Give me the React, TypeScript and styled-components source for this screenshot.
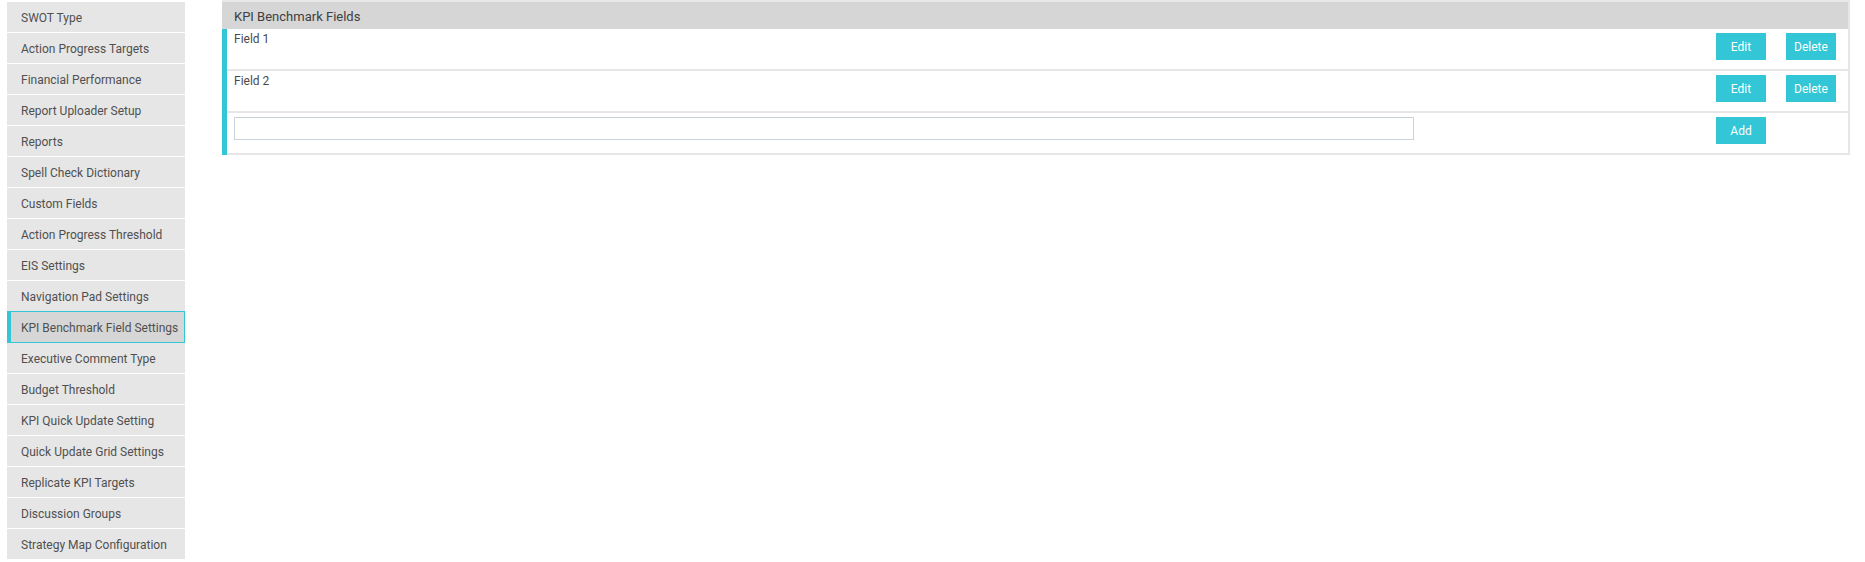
import React from "react";
import styled, { createGlobalStyle } from "styled-components";

const GlobalStyle = createGlobalStyle`
  html, body {
    margin: 0;
    padding: 0;
    background: #ffffff;
    font-family: Roboto, "Liberation Sans", Arial, sans-serif;
  }
  * { box-sizing: border-box; }
`;

const TEAL = "#32c6d6";

const Page = styled.div`
  display: flex;
  align-items: flex-start;
  gap: 37px;
  padding: 0 15px 0 7px;
`;

const Sidebar = styled.ul`
  list-style: none;
  margin: 2px 0 0 0;
  padding: 0;
  width: 178px;
  flex: none;
`;

const NavItem = styled.li<{ $active?: boolean }>`
  height: 31px;
  display: flex;
  align-items: center;
  padding-top: 1px;
  padding-left: ${(p) => (p.$active ? "10px" : "14px")};
  font-size: 12px;
  color: #505050;
  background: ${(p) => (p.$active ? "#d6d6d6" : "#e6e6e6")};
  border-bottom: 1px solid #ffffff;
  border-left: ${(p) => (p.$active ? `4px solid ${TEAL}` : "none")};
  ${(p) =>
    p.$active
      ? `border-top: 1px solid ${TEAL}; border-right: 1px solid ${TEAL}; border-bottom: 1px solid ${TEAL}; margin-top: -1px; height: 32px;`
      : ""}
  white-space: nowrap;
`;

const Panel = styled.section`
  flex: 1;
  border-top: 2px solid #e8e8e8;
  border-right: 2px solid #e6e6e6;
`;

const Header = styled.div`
  height: 27px;
  background: #d6d6d6;
  display: flex;
  align-items: center;
  padding: 1px 0 0 12px;
  font-size: 13px;
  color: #404040;
`;

const Body = styled.div`
  border-left: 5px solid ${TEAL};
`;

const Row = styled.div`
  height: 42px;
  border-bottom: 2px solid #e6e6e6;
  display: flex;
  align-items: flex-start;
  padding: 4px 12px 0 7px;
`;

const Label = styled.div`
  flex: 1;
  font-size: 12px;
  color: #4a4a4a;
  margin-top: -1px;
`;

const InputWrap = styled.div`
  flex: 1;
`;

const TextInput = styled.input`
  width: 1180px;
  height: 23px;
  border: 1px solid #c8d4d9;
  outline: none;
  padding: 0 4px;
  font-family: inherit;
`;

const Actions = styled.div`
  display: flex;
  gap: 20px;
  width: 120px;
`;

const Button = styled.button`
  width: 50px;
  height: 27px;
  border: none;
  background: ${TEAL};
  color: #ffffff;
  font-family: Roboto, "Liberation Sans", Arial, sans-serif;
  font-size: 12px;
  padding: 0;
  cursor: pointer;
`;

const items = [
  "SWOT Type",
  "Action Progress Targets",
  "Financial Performance",
  "Report Uploader Setup",
  "Reports",
  "Spell Check Dictionary",
  "Custom Fields",
  "Action Progress Threshold",
  "EIS Settings",
  "Navigation Pad Settings",
  "KPI Benchmark Field Settings",
  "Executive Comment Type",
  "Budget Threshold",
  "KPI Quick Update Setting",
  "Quick Update Grid Settings",
  "Replicate KPI Targets",
  "Discussion Groups",
  "Strategy Map Configuration",
];

const fields = ["Field 1", "Field 2"];

export default function App() {
  return (
    <>
      <GlobalStyle />
      <Page>
        <Sidebar>
          {items.map((it) => (
            <NavItem key={it} $active={it === "KPI Benchmark Field Settings"}>
              {it}
            </NavItem>
          ))}
        </Sidebar>
        <Panel>
          <Header>KPI Benchmark Fields</Header>
          <Body>
            {fields.map((f) => (
              <Row key={f}>
                <Label>{f}</Label>
                <Actions>
                  <Button>Edit</Button>
                  <Button>Delete</Button>
                </Actions>
              </Row>
            ))}
            <Row>
              <InputWrap>
                <TextInput type="text" />
              </InputWrap>
              <Actions>
                <Button>Add</Button>
              </Actions>
            </Row>
          </Body>
        </Panel>
      </Page>
    </>
  );
}
